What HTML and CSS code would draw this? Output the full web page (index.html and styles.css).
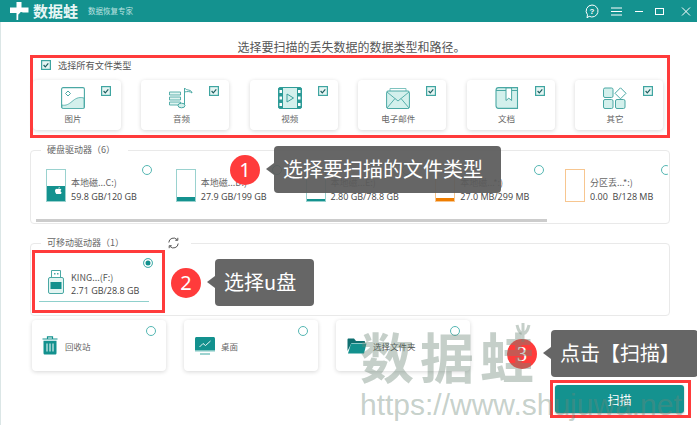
FILE: index.html
```html
<!DOCTYPE html>
<html lang="zh-CN">
<head>
<meta charset="utf-8">
<title>数据蛙</title>
<link rel="stylesheet" href="styles.css">
</head>
<body>
<svg class="defs" width="0" height="0" aria-hidden="true">
  <symbol id="chk" viewBox="0 0 10 10">
    <rect x=".6" y=".6" width="8.8" height="8.8" fill="#e6f5f3" stroke="#3fa5a1" stroke-width="1.2"/>
    <path d="M2.6 5l1.7 1.8 3-3.4" fill="none" stroke="#1d5e60" stroke-width="1.2"/>
  </symbol>
</svg>
<div class="window">
  <header class="titlebar">
    <div class="brand">
      <svg class="brand-mark" width="19" height="18" viewBox="0 0 19 18"><path d="M6.500 0h5v5.500h7v5h-5.500c-.8 0-1.500-1-2.500-.3-1.200.8-1 1.800-2.200 2.300l-.1 5.500h-1.700v-7h-6.500v-5.500h6.500z" fill="#fff"/></svg>
      <span class="brand-name">数据蛙</span>
      <span class="brand-sub">数据恢复专家</span>
    </div>
    <div class="controls">
      <svg width="14" height="15" viewBox="0 0 14 15"><path d="M7 1a6 6 0 1 1-2.800 11.300L2 13.800l.5-3A6 6 0 0 1 7 1z" fill="none" stroke="#fff" stroke-width="1"/><text x="7" y="9.800" class="qm">?</text></svg>
      <svg width="11" height="9" viewBox="0 0 11 9"><path d="M0 1h11M0 4.500h11M0 8h11" stroke="#fff" stroke-width="1"/></svg>
      <svg width="8" height="9" viewBox="0 0 8 9"><path d="M0 4.500h8" stroke="#fff" stroke-width="1"/></svg>
      <svg width="9" height="9" viewBox="0 0 9 9"><rect x=".5" y="1.500" width="8" height="6" fill="none" stroke="#fff" stroke-width="1"/></svg>
      <svg width="10" height="9" viewBox="0 0 10 9"><path d="M1 .5l8 8M9 .5l-8 8" stroke="#fff" stroke-width="1"/></svg>
    </div>
  </header>

  <main class="content">
    <h1 class="heading">选择要扫描的丢失数据的数据类型和路径。</h1>

    <section class="types">
      <label class="all"><svg class="check" width="10" height="10"><use href="#chk"/></svg>选择所有文件类型</label>
      <div class="type-row">
        <div class="type-card">
          <svg class="check type-check" width="10" height="10"><use href="#chk"/></svg>
          <svg width="24" height="22" viewBox="0 0 24 22"><rect x=".6" y=".6" width="22.800" height="20.800" rx="1.500" fill="#fff" stroke="#4aa8a4" stroke-width="1.100"/><path d="M1 18c4 1 7-1 10-3.500s6-5 12-3.500v9c0 1-.5 1.500-1.500 1.500h-19c-1 0-1.500-.5-1.500-1.500z" fill="#d3f0ec" stroke="#4aa8a4" stroke-width=".8"/><path d="M7 4l2.500 2.500L7 9 4.500 6.500z" fill="none" stroke="#4aa8a4"/></svg>
          <span>图片</span>
        </div>
        <div class="type-card">
          <svg width="24" height="22" viewBox="0 0 24 22"><path d="M.5 5h11v3h-11zM.5 10h11v3h-11zM.5 15h11v3h-11z" fill="#e0f4f1" stroke="#4aa8a4" stroke-width=".9"/><ellipse cx="12.500" cy="18.500" rx="3.500" ry="2.300" fill="#d3f0ec" stroke="#4aa8a4"/><path d="M15.500 18V1c2 3 7 1 7.500 5-2-2-5-1.500-7.500-1" fill="none" stroke="#4aa8a4"/></svg>
          <svg class="check type-check" width="10" height="10"><use href="#chk"/></svg>
          <span>音频</span>
        </div>
        <div class="type-card">
          <svg width="24" height="22" viewBox="0 0 24 22"><rect x=".5" y=".5" width="23" height="21" rx="1.500" fill="#d3f0ec" stroke="#2f9c98"/><path d="M.5 1h4.500v20H.5zM19 1h4.500v20H19z" fill="#2b9a96"/><path d="M1.500 3h2.500v3H1.500zM1.500 9.500h2.500v3H1.500zM1.500 16h2.500v3H1.500zM20 3h2.500v3H20zM20 9.500h2.500v3H20zM20 16h2.500v3H20z" fill="#fff"/><path d="M9 7v8l6.500-4z" fill="none" stroke="#3a9e9a"/></svg>
          <svg class="check type-check" width="10" height="10"><use href="#chk"/></svg>
          <span>视频</span>
        </div>
        <div class="type-card">
          <svg width="24" height="22" viewBox="0 0 24 22"><path d="M4 4V1.500h16V4" fill="none" stroke="#7fc3bf"/><rect x=".6" y="4" width="22.800" height="17.500" rx="1.500" fill="#d3f0ec" stroke="#4aa8a4"/><path d="M1 5l11 9 11-9M1 21l8-9.500M23 21l-8-9.500" fill="none" stroke="#4aa8a4" stroke-width=".9"/></svg>
          <svg class="check type-check" width="10" height="10"><use href="#chk"/></svg>
          <span>电子邮件</span>
        </div>
        <div class="type-card">
          <svg width="24" height="22" viewBox="0 0 24 22"><path d="M1 3.500C1 2 2 .6 3.500.6h19v20.800H3.500C2 21.400 1 20 1 18.500z" fill="#d3f0ec" stroke="#4aa8a4" stroke-width="1.100"/><path d="M1 3.500h21.500" stroke="#4aa8a4"/><path d="M11 1v12.500l2.800-2.300 2.800 2.300V1z" fill="#fff" stroke="#4aa8a4"/></svg>
          <svg class="check type-check" width="10" height="10"><use href="#chk"/></svg>
          <span>文档</span>
        </div>
        <div class="type-card">
          <svg width="24" height="22" viewBox="0 0 24 22"><rect x=".5" y="1" width="9.500" height="9.500" rx="1.500" fill="#d3f0ec" stroke="#4aa8a4"/><path d="M17.500.8l5.500 5.500-5.500 5.500-5.500-5.500z" fill="#fff" stroke="#4aa8a4"/><rect x=".5" y="12.500" width="9.500" height="9" rx="1.500" fill="#d3f0ec" stroke="#4aa8a4"/><rect x="12.500" y="12.500" width="9.500" height="9" rx="1.500" fill="#d3f0ec" stroke="#4aa8a4"/></svg>
          <svg class="check type-check" width="10" height="10"><use href="#chk"/></svg>
          <span>其它</span>
        </div>
      </div>
    </section>

    <fieldset class="group group-disks">
      <legend>硬盘驱动器（6）</legend>
      <div class="disks">
        <div class="disk">
          <div class="bar teal half"><svg class="os" width="7" height="7" viewBox="0 0 7 7"><path d="M4.800 0c0 1-.7 1.600-1.500 1.600 0-.9.700-1.500 1.500-1.600zM3.400 2c.5 0 .9-.3 1.500-.3.600 0 1.100.3 1.500.8-1.200.8-1 2.400.3 2.900-.4 1-1 2-1.800 2-.5 0-.8-.3-1.400-.3s-1 .3-1.500.3C1.200 7.400 0 5.300 0 3.800 0 2.400.9 1.700 1.900 1.700c.6 0 1.100.3 1.500.3z" fill="#fff"/></svg></div>
          <div class="disk-text"><span class="name">本地磁...C:)</span><span class="size">59.8 GB/120 GB</span></div>
          <i class="radio"></i>
        </div>
        <div class="disk">
          <div class="bar teal low"></div>
          <div class="disk-text"><span class="name">本地磁...D:)</span><span class="size">27.9 GB/199 GB</span></div>
          <i class="radio"></i>
        </div>
        <div class="disk">
          <div class="bar teal thin"></div>
          <div class="disk-text"><span class="name">本地磁...E:)</span><span class="size">2.80 GB/78.8 GB</span></div>
          <i class="radio"></i>
        </div>
        <div class="disk disk-wide">
          <div class="bar orange thin"></div>
          <div class="disk-text"><span class="name">本地磁...*:)</span><span class="size">27.0 MB/299 MB</span></div>
          <i class="radio"></i>
        </div>
        <div class="disk">
          <div class="bar orange empty"></div>
          <div class="disk-text"><span class="name">分区丢...*:)</span><span class="size">0.00 &nbsp;B/128 MB</span></div>
          <i class="radio"></i>
        </div>
      </div>
      <div class="scrollbar"></div>
    </fieldset>

    <fieldset class="group group-usb">
      <legend>可移动驱动器（1）<svg class="refresh" width="13" height="12" viewBox="0 0 13 12"><path d="M1.800 5.500A4.700 4.700 0 0 1 10 2.600M11.200 6.500A4.700 4.700 0 0 1 3 9.400" fill="none" stroke="#444" stroke-width=".9"/><path d="M10.800.8v2.500H8.300M2.200 11.200V8.700h2.500" fill="none" stroke="#444" stroke-width=".9"/></svg></legend>
      <div class="usb">
        <svg width="16" height="24" viewBox="0 0 16 24"><path d="M3.500.5h9v7h-9z" fill="#fff" stroke="#4aa8a4"/><path d="M6 3h1.500v1.500H6zM9 3h1.500v1.500H9z" fill="#4aa8a4"/><rect x=".5" y="7.500" width="15" height="16" rx="1.500" fill="#e3f5f2" stroke="#4aa8a4"/><rect x="2.500" y="12" width="11" height="7" fill="#13918e"/></svg>
        <div class="disk-text"><span class="name usb-name">KING...(F:)</span><span class="size">2.71 GB/28.8 GB</span></div>
        <i class="radio on"></i>
        <div class="usb-line"></div>
      </div>
    </fieldset>

    <div class="places">
      <div class="place">
        <svg width="16" height="19" viewBox="0 0 16 19"><path d="M5.500 2.500V.8h5v1.700M.5 3h15" fill="none" stroke="#13918e" stroke-width="1.200"/><path d="M1.500 4.800h13V17c0 1-.6 1.600-1.500 1.600H3c-.9 0-1.500-.6-1.500-1.600z" fill="#13918e"/><path d="M5 7.500v8M8 7.500v8M11 7.500v8" stroke="#fff" stroke-width="1"/></svg>
        <span>回收站</span><i class="radio"></i>
      </div>
      <div class="place">
        <svg width="20" height="18" viewBox="0 0 20 18"><path d="M0 1.500C0 .7.700 0 1.500 0h17c.8 0 1.500.7 1.500 1.500V13H0z" fill="#13918e"/><path d="M0 13h20v1.500H0z" fill="#7cc4c0"/><path d="M5 17h10" stroke="#7cc4c0" stroke-width="1.500"/><path d="M4.500 10l3.500-3.500 2.500 2L15.500 4" fill="none" stroke="#fff" stroke-width=".9"/></svg>
        <span>桌面</span><i class="radio"></i>
      </div>
      <div class="place">
        <svg width="20" height="16" viewBox="0 0 20 16"><path d="M.5 13V1.500C.5 1 1 .5 1.500.5H7L9 3h8c.7 0 1 .4 1 1v1H4.500z" fill="#0f6f70"/><path d="M4 5.500h15.500L17 15.500H1z" fill="#13918e"/></svg>
        <span class="place-dark">选择文件夹</span><i class="radio"></i>
      </div>
    </div>

    <div class="actions"><button class="scan" type="button">扫描</button></div>
  </main>
</div>

<div class="mark mark-types"></div>
<div class="mark mark-usb"></div>
<div class="mark mark-scan"></div>

<div class="note note-1"><b>1</b><span>选择要扫描的文件类型</span></div>
<div class="note note-2"><b>2</b><span>选择u盘</span></div>
<div class="note note-3"><b class="num-3">3</b><span>点击【扫描】</span></div>

<div class="watermark">
  <svg class="paw" width="16" height="20" viewBox="0 0 16 20"><path d="M8 20V8M8 12C4 11 3 7 2 3M8 12c4-1 5-5 6-9M8 8V1" fill="none" stroke="currentColor" stroke-width="3"/></svg>
  <div class="wm-cn">数据蛙</div>
  <div class="wm-url">https://www.shujuwa.net</div>
</div>
</body>
</html>
```
FILE: styles.css
```css
* { box-sizing: border-box; }
html, body { margin: 0; padding: 0; }
body {
  width: 697px;
  height: 425px;
  overflow: hidden;
  position: relative;
  background: #fff;
  font-family: "Noto Sans CJK SC", "Noto Sans", sans-serif;
  color: #555;
}
.defs { position: absolute; }
.window { display: flex; flex-direction: column; height: 425px; }

.titlebar {
  flex: none;
  height: 22px;
  background: #14928f;
  display: flex;
  align-items: center;
  justify-content: space-between;
  padding: 0 6px 0 10px;
  color: #fff;
}
.brand { display: flex; align-items: center; }
.brand-mark { margin-right: 4px; }
.brand-name { font-size: 15px; font-weight: 700; line-height: 22px; width: 55px; color: #e8f6f5; }
.brand-sub { font-size: 7.500px; line-height: 22px; color: #bfe3e1; }
.controls { display: flex; align-items: center; gap: 12px; }
.controls svg:nth-child(3) { margin-left: 1px; }
.controls svg:nth-child(5) { margin-left: 5px; }
.qm { font: 700 8px "Liberation Sans", sans-serif; fill: #fff; text-anchor: middle; }

.content {
  flex: 1;
  padding: 17px 27px 0 29px;
  border-left: 1px solid #dbe6e6;
}
.heading {
  margin: 0;
  font-size: 12px;
  font-weight: 400;
  line-height: 16px;
  height: 16px;
  text-align: center;
  color: #555;
  padding-left: 3px;
}

.types { height: 83px; padding: 5px 7px 0 3px; }
.all {
  display: flex;
  align-items: center;
  gap: 7px;
  margin-left: 8px;
  height: 10px;
  font-size: 9.200px;
  line-height: 10px;
  color: #555;
}
.check { display: block; flex: none; }
.type-row { display: flex; justify-content: space-between; margin-top: 10px; }
.type-card {
  position: relative;
  width: 88px;
  height: 50px;
  border-radius: 4px;
  background: #fff;
  box-shadow: 0 1px 4px rgba(0, 0, 0, .16);
  display: flex;
  flex-direction: column;
  align-items: center;
  padding: 7px 8px 0 0;
}
.type-card span { font-size: 8.500px; line-height: 12px; margin-top: 3px; color: #666; }
.type-check { position: absolute; top: 6px; right: 10px; }

.group {
  margin: 0;
  padding: 0;
  min-width: 0;
  border: 1px solid #e9e9e9;
  border-radius: 4px;
}
.group legend {
  margin-left: 10px;
  padding: 0 0 0 6px;
  height: 14px;
  font-size: 9px;
  line-height: 14px;
  color: #666;
  display: flex;
  align-items: center;
}
.group-disks legend { width: 87px; }
.group-usb legend { width: 150px; }
.group-disks { margin-top: 5px; height: 81px; }
.disks { display: flex; padding: 12px 0 0 15px; overflow: hidden; height: 60px; width: 637px; }
.disk { position: relative; flex: none; width: 129.750px; display: flex; gap: 5px; }
.bar {
  flex: none;
  width: 20px;
  height: 33px;
  border: 1px solid #9ad2cf;
  position: relative;
  display: flex;
  flex-direction: column;
  justify-content: flex-end;
}
.bar::after { content: ""; display: block; background: #14928f; height: var(--fill, 0); }
.bar.half { --fill: 15px; }
.bar.low { --fill: 4px; }
.bar.thin { --fill: 2px; }
.bar.orange { border-color: #f7c690; }
.bar.orange::after { background: #ef7d00; }
.bar.orange.thin { --fill: 3px; }
.os { position: absolute; right: 3px; bottom: 7px; }
.disk-text { display: flex; flex-direction: column; padding-top: 8px; }
.name { font-size: 9px; line-height: 12px; color: #666; }
.size { font: 9px/13px "Open Sans", "Noto Sans", sans-serif; color: #444; margin-top: 1px; white-space: nowrap; }
.radio {
  position: absolute;
  width: 10px;
  height: 10px;
  border: 1px solid #55b7b3;
  border-radius: 50%;
  background: #fff;
}
.disk .radio { left: 96px; top: -4px; }
.disk-wide .radio { left: 99px; }
.scrollbar { height: 3px; width: 511px; margin: 2px 0 0 5px; background: #ccc; }

.group-usb { margin-top: 12px; height: 80px; }
.refresh { margin-left: auto; margin-right: 11px; }
.usb {
  position: relative;
  width: 132px;
  height: 62px;
  margin-left: 1px;
  padding: 20px 0 0 16px;
  display: flex;
  gap: 7px;
}
.usb .disk-text { padding-top: 2px; }
.usb .size { margin-top: 0; }
.usb-name { color: #555; }
.usb .radio { left: 111px; top: 8px; background: #13918e; box-shadow: inset 0 0 0 1.500px #fff; }
.usb-line { position: absolute; left: 7px; top: 51px; width: 110px; height: 1px; background: #8fd0cc; }

.places { display: flex; gap: 18px; margin-top: 4px; margin-left: 2px; }
.place {
  position: relative;
  width: 134px;
  height: 51px;
  border-radius: 4px;
  background: #fff;
  box-shadow: 0 1px 4px rgba(0, 0, 0, .16);
  display: flex;
  align-items: center;
  padding-left: 11px;
  gap: 7px;
  font-size: 8.500px;
  color: #666;
}
.place:first-child { padding-left: 10px; }
.place:nth-child(2) { gap: 6px; }
.place .radio { right: 10px; top: 6px; }
.place-dark { color: #444; margin-left: -1px; }

.actions { display: flex; justify-content: flex-end; margin: 14px -14px 0 0; }
.scan {
  width: 129px;
  height: 28px;
  border: 0;
  border-radius: 3px;
  background: #14928f;
  color: #fff;
  font: 12px "Noto Sans CJK SC", sans-serif;
  box-shadow: 0 1px 2px rgba(0, 0, 0, .3);
}

.mark { position: absolute; border: 3px solid #ff3b3b; }
.mark-types { left: 30px; top: 55px; width: 640px; height: 83px; }
.mark-usb { left: 32px; top: 250px; width: 133px; height: 63px; }
.mark-scan { left: 550px; top: 380px; width: 141px; height: 38px; }

.note { position: absolute; display: flex; align-items: center; height: 47px; }
.note-1 { left: 230px; top: 146px; }
.note-2 { left: 171px; top: 259px; }
.note-3 { left: 507px; top: 330px; }
.note b {
  flex: none;
  width: 30px;
  height: 30px;
  border-radius: 50%;
  background: #ff3b3b;
  color: #fff;
  font: 400 20px/30px "Noto Sans", sans-serif;
  text-align: center;
  margin-right: 14px;
}
.note b.num-3 { font-family: "Liberation Serif", serif; }
.note span {
  position: relative;
  height: 47px;
  padding: 0 18px 0 9px;
  border-radius: 4px;
  background: rgba(90, 90, 90, .93);
  color: #fff;
  font-size: 20px;
  line-height: 46px;
  white-space: nowrap;
}
.note span::before {
  content: "";
  position: absolute;
  left: -8px;
  top: 17px;
  border: 6px solid transparent;
  border-left: 0;
  border-right: 8px solid rgba(90, 90, 90, .93);
}

.watermark {
  position: absolute;
  left: 360px;
  top: 325px;
  width: 337px;
  color: rgba(110, 135, 120, .4);
  pointer-events: none;
}
.paw { position: absolute; left: 155px; top: -3px; }
.wm-cn { font-size: 54px; font-weight: 700; line-height: 62px; letter-spacing: 6px; }
.wm-url { font: 30px/34px "Liberation Sans", sans-serif; margin-top: 1px; white-space: nowrap; }
```
